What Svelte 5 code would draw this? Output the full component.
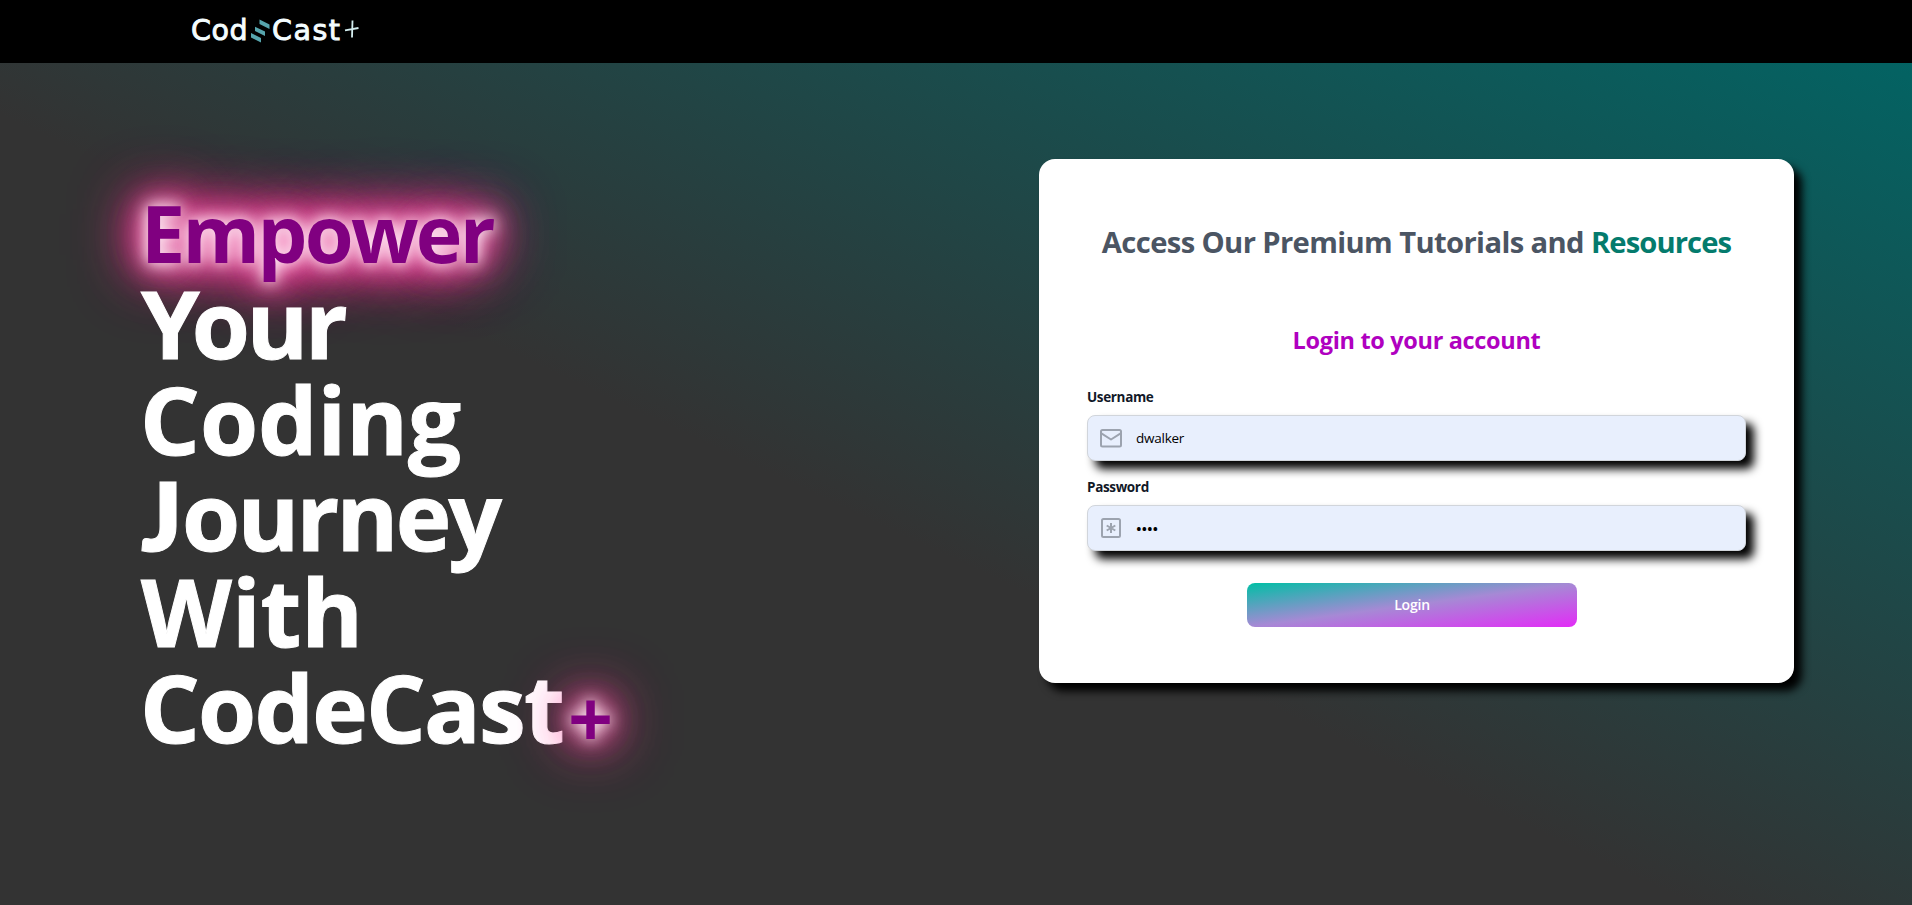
<script>
  let username = $state('dwalker');
  let password = $state('pass');
</script>

<div class="page">
  <header class="topbar">
    <svg class="logo" width="190" height="56" viewBox="-10 -10 190 56" role="img" aria-label="CodeCast+">
      <g fill="#f4fdff" stroke="#f4fdff" stroke-width="0.9" font-family="'DejaVu Sans', sans-serif" font-size="28.5">
        <text x="1" y="28" textLength="56.5">Cod</text>
        <text x="82" y="28" textLength="68">Cast</text>
      </g>
      <g fill="#57a5ad">
        <path d="M69.5 7.500 79.5 12.500v4.5l-10-5z" />
        <path d="M65 14.7 75 19.500v4.500l-10-5z" />
        <path d="M61 21 71 26v4.500l-10-5z" />
      </g>
      <path d="M162.500 8.500 162 25.500M155 18.300 168.500 16" fill="none" stroke="#d5eef0" stroke-width="1.8" />
    </svg>
  </header>

  <main>
    <h1 class="hero">
      <span class="line glow empower">Empower</span>
      <span class="line your"><span class="y">Y</span>our</span>
      <span class="line coding">Coding</span>
      <span class="line journey"><span class="j">J</span>ourney</span>
      <span class="line with">With</span>
      <span class="line cast">CodeCast<span class="glow plus">+</span></span>
    </h1>

    <section class="card">
      <h2>Access Our Premium Tutorials and <span>Resources</span></h2>
      <h3>Login to your account</h3>
      <form onsubmit={(e) => e.preventDefault()}>
        <label for="username">Username</label>
        <div class="field">
          <svg width="24" height="24" viewBox="0 0 24 24" fill="none" stroke="#9ca3af" stroke-width="2" stroke-linejoin="round">
            <rect x="2" y="4" width="20" height="16.500" rx="1.500" />
            <path d="M2 7.200 12 13.500 22 7.200" />
          </svg>
          <input id="username" type="text" bind:value={username} />
        </div>
        <label for="password">Password</label>
        <div class="field">
          <svg width="24" height="24" viewBox="0 0 24 24" fill="none" stroke="#9ca3af" stroke-width="2" stroke-linejoin="round">
            <rect x="3" y="3" width="18" height="18" rx="1.500" />
            <path d="M12 7v10M7.700 9.500 16.300 14.500M16.300 9.500 7.700 14.500" />
          </svg>
          <input id="password" type="password" bind:value={password} />
        </div>
        <button type="submit">Login</button>
      </form>
    </section>
  </main>
</div>

<style>
  :global(body) {
    margin: 0;
    overflow: hidden;
  }
  .page {
    display: flex;
    flex-direction: column;
    height: 905px;
    font-family: 'Open Sans', 'Noto Sans', sans-serif;
  }
  .topbar {
    box-sizing: border-box;
    height: 63px;
    padding: 2px 0 0 180px;
    background: #000;
  }
  .logo {
    display: block;
  }
  main {
    flex: 1;
    display: flex;
    justify-content: space-between;
    align-items: flex-start;
    padding: 96px 118px 0 141px;
    background: linear-gradient(205deg, #006666 -57px, #333333 855px);
  }
  h1,
  h2,
  h3 {
    margin: 0;
    font-weight: 700;
  }
  .hero {
    padding-top: 20px;
    color: #fff;
    font-size: 94px;
    line-height: 96px;
  }
  .line {
    display: block;
    white-space: nowrap;
  }
  .your,
  .coding,
  .journey,
  .with,
  .cast {
    -webkit-text-stroke: 1px currentColor;
  }
  .glow {
    font-size: 79px;
    color: #800080;
    -webkit-text-stroke: 0;
    text-shadow:
      0 0 15px #fff,
      0 0 25px #ffb8dc,
      0 0 35px #f73a98,
      0 0 45px #f73a98,
      0 0 55px #f73a98,
      0 0 65px #f73a98,
      0 0 75px #f73a98;
  }
  .empower {
    height: 96px;
    line-height: 108px;
    letter-spacing: -2.7px;
  }
  .your {
    position: relative;
    letter-spacing: -3.3px;
  }
  .y {
    letter-spacing: -8px;
  }
  .coding {
    margin-left: -1px;
  }
  .journey {
    letter-spacing: -2.7px;
  }
  .j {
    display: inline-block;
    width: 41px;
    font-family: Lato, 'Open Sans', sans-serif;
    font-weight: 800;
    letter-spacing: 0;
  }
  .cast {
    margin-left: -1px;
    letter-spacing: -1.8px;
  }
  .plus {
    position: relative;
    top: 5px;
    margin-left: 5px;
  }
  .card {
    box-sizing: border-box;
    width: 755px;
    height: 524px;
    padding: 65px 48px 56px;
    border-radius: 16px;
    background: #fff;
    box-shadow: 8px 8px 8px #000;
  }
  h2 {
    color: #4b5563;
    font-size: 29.2px;
    line-height: 36px;
    letter-spacing: -0.62px;
    text-align: center;
    white-space: nowrap;
  }
  h2 span {
    color: #047b6d;
    letter-spacing: -0.9px;
  }
  h3 {
    margin: 64px 0 31px;
    color: #b000c0;
    font-size: 23.5px;
    line-height: 32px;
    letter-spacing: -0.33px;
    text-align: center;
  }
  form {
    display: flex;
    flex-direction: column;
  }
  label {
    margin-bottom: 8px;
    color: #111827;
    font-size: 13.5px;
    font-weight: 700;
    line-height: 20px;
    letter-spacing: -0.35px;
  }
  .field {
    box-sizing: border-box;
    display: flex;
    align-items: center;
    gap: 13px;
    height: 46px;
    margin-bottom: 16px;
    padding: 0 11px;
    border: 1px solid #d1d5db;
    border-radius: 8px;
    background: #e8effd;
    box-shadow: 8px 8px 10px #000;
  }
  .field svg {
    flex: none;
  }
  input {
    flex: 1;
    min-width: 0;
    padding: 0;
    border: 0;
    outline: 0;
    background: transparent;
    color: #000;
    font-family: inherit;
    font-size: 13.5px;
    line-height: 20px;
    letter-spacing: -0.25px;
  }
  #password {
    font-size: 15px;
    font-weight: 600;
    letter-spacing: -0.1px;
  }
  button {
    width: 330px;
    height: 44px;
    margin: 16px 0 0 160px;
    padding: 0;
    border: 0;
    border-radius: 8px;
    background: linear-gradient(to bottom right, #00bfa5, #a689d5 50%, #e32bf7);
    color: #fff;
    font-family: inherit;
    font-size: 14px;
    font-weight: 600;
    line-height: 20px;
    letter-spacing: -0.2px;
  }
</style>
